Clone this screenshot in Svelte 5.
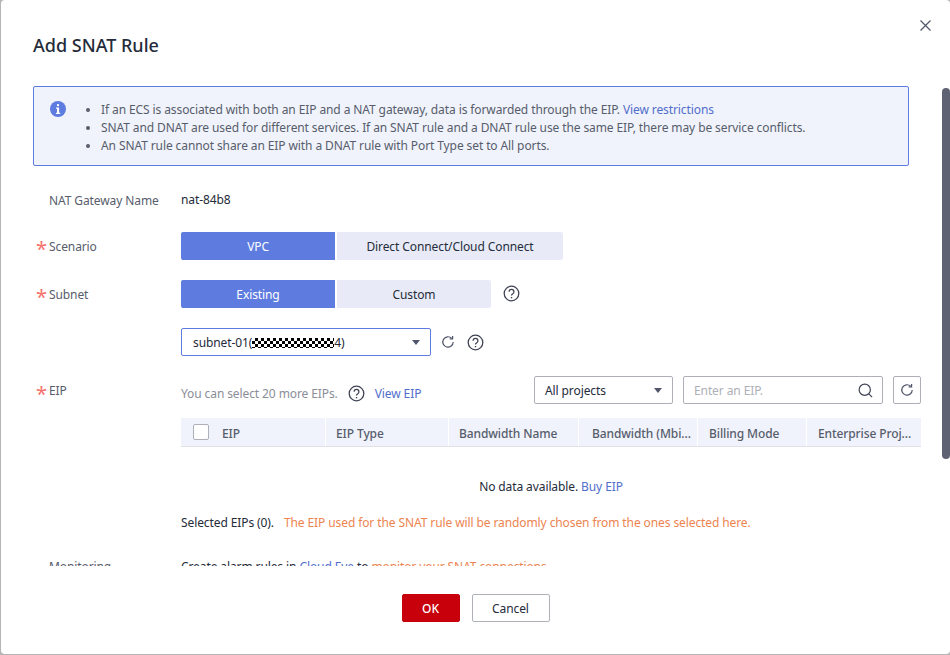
<script>
  const columns = [
    { label: 'EIP', width: 145 },
    { label: 'EIP Type', width: 123 },
    { label: 'Bandwidth Name', width: 130 },
    { label: 'Bandwidth (Mbi...', width: 119, pad: 13 },
    { label: 'Billing Mode', width: 109, pad: 11 },
    { label: 'Enterprise Proj...', width: 114, pad: 11 }
  ];
</script>

{#snippet help()}
  <svg class="help" width="17" height="17" viewBox="0 0 17 17" fill="none" stroke="#3f4354">
    <circle cx="8.5" cy="8.5" r="7.3" stroke-width="1.3" />
    <path d="M6.1 6.7a2.4 2.4 0 1 1 3.6 2.1c-.8.4-1.2.9-1.2 1.8" stroke-width="1.3" />
    <path d="M8.5 12v1.3" stroke-width="1.4" />
  </svg>
{/snippet}

{#snippet refresh()}
  <svg width="14" height="14" viewBox="0 0 14 14" fill="none" stroke="#50556a">
    <path d="M12.2 7a5.2 5.2 0 1 1-1.6-3.8" stroke-width="1.2" />
    <path d="M11.6 1v2.9H8.7" stroke-width="1.2" />
  </svg>
{/snippet}

<div class="dialog">
  <button class="close" aria-label="Close">
    <svg width="11" height="11" viewBox="0 0 11 11" stroke="#50556a" stroke-width="1.2">
      <path d="M.5.5l10 10M10.5.5l-10 10" />
    </svg>
  </button>

  <h1>Add SNAT Rule</h1>

  <div class="content">
    <div class="alert">
      <svg class="info" width="16" height="16" viewBox="0 0 16 16">
        <circle cx="8" cy="8" r="8" fill="#5e7ce0" />
        <rect x="6.9" y="3" width="2.2" height="2.2" rx="1" fill="#fff" />
        <path d="M6 6.6h3.1v5.2H10.2v1.2H5.9v-1.2h1.1V7.8H6z" fill="#fff" />
      </svg>
      <ul>
        <li>If an ECS is associated with both an EIP and a NAT gateway, data is forwarded through the EIP. <a href="#r">View restrictions</a></li>
        <li>SNAT and DNAT are used for different services. If an SNAT rule and a DNAT rule use the same EIP, there may be service conflicts.</li>
        <li>An SNAT rule cannot share an EIP with a DNAT rule with Port Type set to All ports.</li>
      </ul>
    </div>

    <div class="row name-row">
      <div class="label">NAT Gateway Name</div>
      <div class="value nudged">nat-84b8</div>
    </div>

    <div class="row scenario-row">
      <div class="label required lowered">Scenario</div>
      <div class="tabs">
        <button class="tab active">VPC</button>
        <button class="tab wide">Direct Connect/Cloud Connect</button>
      </div>
    </div>

    <div class="row subnet-row">
      <div class="label required lowered">Subnet</div>
      <div class="tabs">
        <button class="tab active">Existing</button>
        <button class="tab last">Custom</button>
        <span class="tab-help">{@render help()}</span>
      </div>
    </div>

    <div class="row select-row">
      <div class="label"></div>
      <div class="subnet-select">
        <div class="select focused">
          <span>subnet-01(<span class="masked"></span>4)</span>
          <i class="caret"></i>
        </div>
        <span class="icon-refresh">{@render refresh()}</span>
        {@render help()}
      </div>
    </div>

    <div class="row eip-row">
      <div class="label required">EIP</div>
      <div class="eip">
        <div class="toolbar">
          <div class="quota">
            <span class="muted">You can select 20 more EIPs.</span>
            {@render help()}
            <a href="#e">View EIP</a>
          </div>
          <div class="filters">
            <div class="select projects">
              <span>All projects</span>
              <i class="caret"></i>
            </div>
            <div class="search">
              <span>Enter an EIP.</span>
              <svg width="15" height="15" viewBox="0 0 16 16" fill="none" stroke="#3f4354" stroke-width="1.3">
                <circle cx="7.2" cy="7.2" r="6" />
                <path d="M11.6 11.6l3.4 3.4" />
              </svg>
            </div>
            <button class="refresh-btn" aria-label="Refresh">
              <svg width="14" height="14" viewBox="0 0 14 14" fill="none" stroke="#50556a">
                <path d="M12.2 7a5.2 5.2 0 1 1-1.6-3.8" stroke-width="1.2" />
                <path d="M11.6 1v2.9H8.7" stroke-width="1.2" />
              </svg>
            </button>
          </div>
        </div>

        <div class="thead">
          <div class="check"><i></i></div>
          {#each columns as col, i}
            <div class="th" style="width: {col.width}px; padding-left: {i === 0 ? 41 : (col.pad ?? 10)}px">{col.label}</div>
          {/each}
        </div>
        <div class="empty">No data available. <a href="#b">Buy EIP</a></div>
        <div class="selected">Selected EIPs (0). <span class="warn spaced">The EIP used for the SNAT rule will be randomly chosen from the ones selected here.</span></div>
      </div>
    </div>

    <div class="row monitor-row">
      <div class="label">Monitoring</div>
      <div class="value">Create alarm rules in <a href="#c">Cloud Eye</a> to <span class="warn">monitor your SNAT connections.</span></div>
    </div>
  </div>

  <div class="scrollbar"></div>

  <div class="footer">
    <button class="btn ok">OK</button>
    <button class="btn">Cancel</button>
  </div>
</div>

<style>
  :global(body) {
    margin: 0;
    background: #b5b5b5;
    font-family: "Noto Sans", "Open Sans", sans-serif;
    font-size: 12px;
    letter-spacing: -0.1px;
    color: #252b3a;
  }

  .dialog {
    position: relative;
    box-sizing: border-box;
    height: 654px;
    margin-left: 1px;
    background: #fff;
    border-radius: 4px;
    overflow: hidden;
    display: flex;
    flex-direction: column;
  }

  h1 {
    margin: 0;
    padding: 33px 0 0 32px;
    height: 53px;
    box-sizing: border-box;
    font-size: 18px;
    line-height: 25px;
    font-weight: 500;
    letter-spacing: 0;
    color: #252b3a;
  }

  .close {
    position: absolute;
    top: 20px;
    right: 19px;
    padding: 0;
    border: 0;
    background: none;
    line-height: 0;
  }

  .content {
    height: 513px;
    overflow: hidden;
    padding: 33px 41px 0 32px;
    box-sizing: border-box;
    flex: none;
  }

  .alert {
    box-sizing: border-box;
    height: 80px;
    border: 1px solid #5e7ce0;
    border-radius: 2px;
    background: #f0f3fb;
    padding: 14px 16px;
    display: flex;
    color: #575d6c;
  }

  .info { flex: none; }

  ul {
    margin: 0;
    padding: 0 0 0 35px;
    line-height: 18px;
    font-size: 12px;
  }

  a {
    color: #526ecc;
    text-decoration: none;
  }

  .row {
    display: flex;
  }

  .label {
    position: relative;
    width: 148px;
    flex: none;
    padding-left: 16px;
    box-sizing: border-box;
    color: #575d6c;
    line-height: 28px;
  }

  .lowered { padding-top: 1px; }

  .required::before {
    content: "*";
    position: absolute;
    left: 3px;
    top: 3px;
    color: #f66f6a;
    font-size: 20px;
  }

  .value { line-height: 28px; }
  .nudged { margin-top: -1px; }

  .name-row { margin-top: 21px; }
  .scenario-row { margin-top: 17px; }
  .subnet-row { margin-top: 19px; }
  .select-row { margin-top: 19px; }
  .eip-row { margin-top: 21px; }
  .monitor-row { margin-top: 21px; }

  .tabs {
    display: flex;
    align-items: flex-start;
    gap: 2px;
  }

  .tab {
    width: 154px;
    height: 28px;
    padding: 0;
    border: 0;
    background: #e8ebf7;
    color: #252b3a;
    font: inherit;
    letter-spacing: inherit;
    border-radius: 0;
  }

  .tab.active {
    background: #5e7ce0;
    color: #fff;
    border-radius: 2px 0 0 2px;
  }

  .tab.wide {
    width: 226px;
    border-radius: 0 2px 2px 0;
  }

  .tab.last { border-radius: 0 2px 2px 0; }

  .tab-help {
    margin: 5px 0 0 10px;
    line-height: 0;
  }

  .help { flex: none; }

  .subnet-select {
    display: flex;
    align-items: center;
  }

  .select {
    box-sizing: border-box;
    height: 28px;
    display: flex;
    align-items: center;
    justify-content: space-between;
    border: 1px solid #adb0b8;
    border-radius: 2px;
    padding: 0 10px;
  }

  .select.focused {
    width: 250px;
    padding-left: 11px;
    border-color: #5e7ce0;
    background: #fff;
  }

  .caret {
    width: 0;
    height: 0;
    border-left: 4.5px solid transparent;
    border-right: 4.5px solid transparent;
    border-top: 5px solid #50556a;
  }

  .masked {
    display: inline-block;
    width: 82px;
    height: 10px;
    vertical-align: -1px;
    background: repeating-conic-gradient(#000 0 25%, #fff 0 50%) 0 0 / 6px 6px;
  }

  .icon-refresh {
    margin: 0 12px 0 10px;
    line-height: 0;
  }

  .eip { width: 740px; }

  .toolbar {
    display: flex;
    justify-content: space-between;
    align-items: flex-start;
    height: 28px;
  }

  .quota {
    box-sizing: border-box;
    display: flex;
    align-items: center;
    gap: 10px;
    height: 28px;
    padding-top: 4px;
  }

  .muted { color: #8a8e99; }

  .filters {
    display: flex;
    gap: 10px;
    margin-top: -1px;
  }

  .select.projects { width: 139px; }

  .search {
    box-sizing: border-box;
    width: 200px;
    height: 28px;
    display: flex;
    align-items: center;
    justify-content: space-between;
    padding: 0 9px 0 10px;
    border: 1px solid #adb0b8;
    border-radius: 2px;
    color: #adb0b8;
  }

  .refresh-btn {
    box-sizing: border-box;
    width: 28px;
    height: 28px;
    padding: 0;
    border: 1px solid #adb0b8;
    border-radius: 2px;
    background: #fff;
    line-height: 0;
  }

  .thead {
    display: flex;
    height: 29px;
    margin-top: 13px;
    background: #f0f3fb;
    border-bottom: 1px solid #dfe1e6;
    box-sizing: border-box;
    font-weight: 500;
    color: #575d6c;
  }

  .check {
    width: 0;
    position: relative;
  }

  .check i {
    position: absolute;
    left: 12px;
    top: 6px;
    box-sizing: border-box;
    width: 16px;
    height: 16px;
    background: #fff;
    border: 1px solid #adb0b8;
    border-radius: 2px;
  }

  .th {
    box-sizing: border-box;
    line-height: 31px;
    height: 28px;
    border-right: 1px solid #fff;
    white-space: nowrap;
    flex: none;
  }

  .th:last-child { border-right: 0; }

  .empty {
    text-align: center;
    margin-top: 31px;
    line-height: 18px;
  }

  .selected {
    margin-top: 18px;
    line-height: 18px;
  }

  .warn { color: #ec8450; }
  .spaced { margin-left: 7px; }

  .scrollbar {
    position: absolute;
    top: 88px;
    right: 0;
    width: 8px;
    height: 371px;
    background: #5e6272;
    border-radius: 4px;
  }

  .footer {
    display: flex;
    justify-content: center;
    gap: 12px;
    padding-top: 28px;
  }

  .btn {
    box-sizing: border-box;
    width: 78px;
    height: 28px;
    padding: 0;
    border: 1px solid #adb0b8;
    border-radius: 2px;
    background: #fff;
    color: #252b3a;
    font: inherit;
    letter-spacing: inherit;
  }

  .btn.ok {
    width: 58px;
    background: #c7000b;
    border-color: #c7000b;
    color: #fff;
    font-weight: 500;
  }
</style>
